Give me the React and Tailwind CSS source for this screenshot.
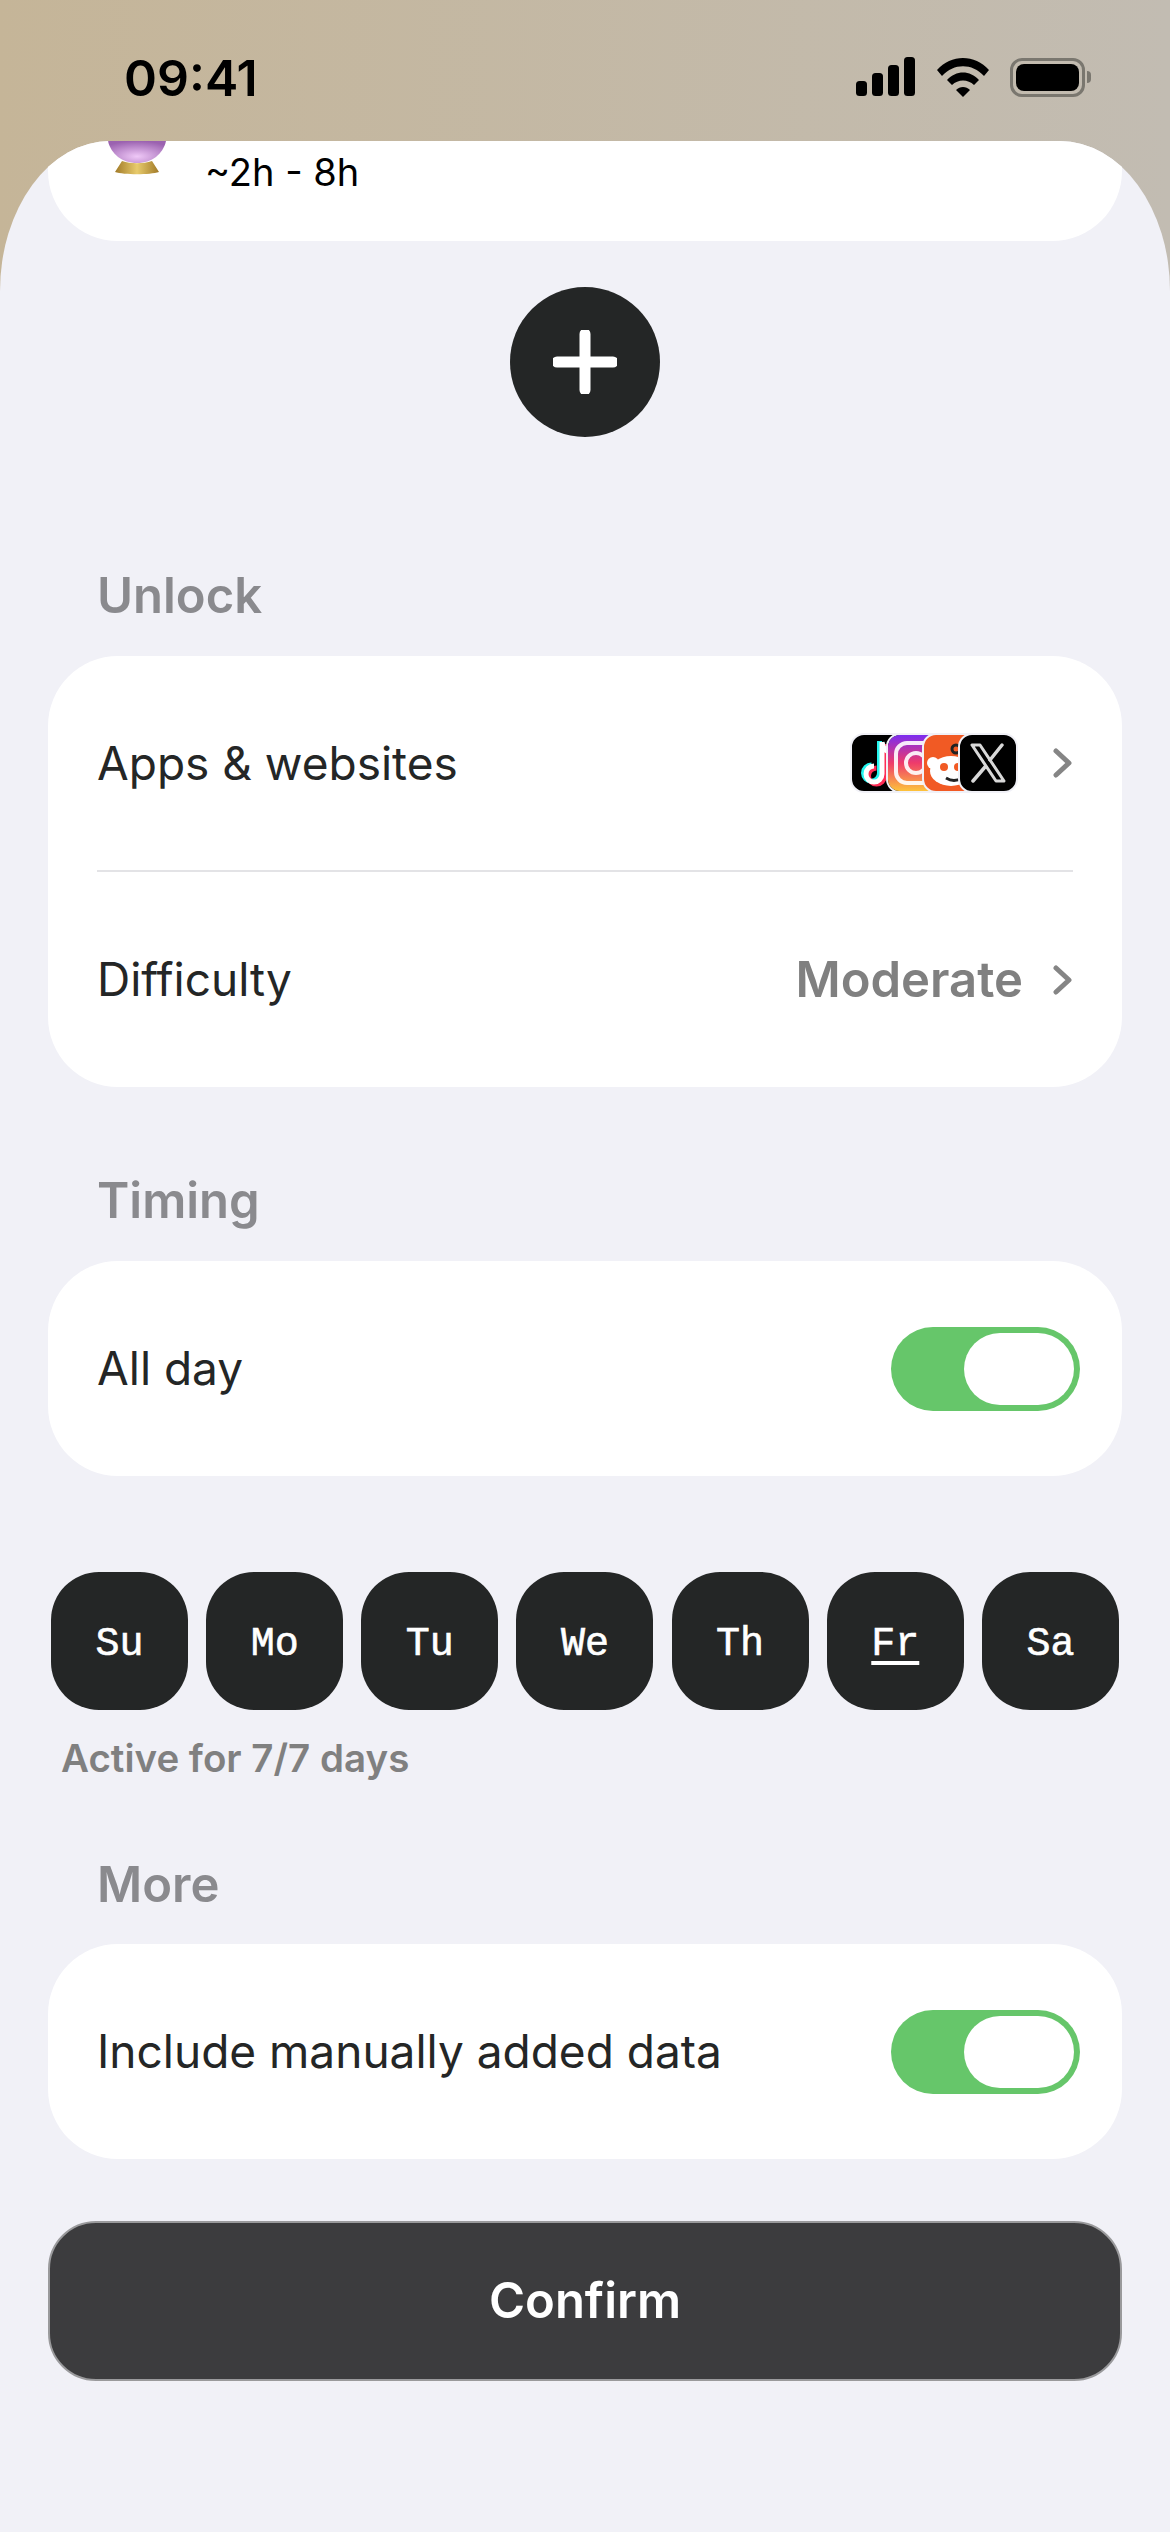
const DAYS = ["Su", "Mo", "Tu", "We", "Th", "Fr", "Sa"];

function Chevron() {
  return (
    <svg width="20" height="30" viewBox="0 0 20 30" fill="none" className="shrink-0 mr-[7px]">
      <path d="M3 3l13 12L3 27" stroke="#858585" strokeWidth="5" strokeLinecap="round" strokeLinejoin="round" />
    </svg>
  );
}

function Toggle() {
  return (
    <div className="w-[189px] h-[84px] rounded-full bg-[#66c66a] flex items-center justify-end pr-[6px] shrink-0">
      <div className="w-[110px] h-[72px] rounded-full bg-white" />
    </div>
  );
}

function Label({ children }) {
  return <div className="h-[58px] leading-[58px] pl-[97px] text-[49px] font-semibold text-[#8a8a8e]">{children}</div>;
}

function Row({ children, h = "h-[215px]" }) {
  return <div className={`${h} flex items-center justify-between pl-[49px] pr-[42px] text-[46px] text-[#242626]`}>{children}</div>;
}

function AppIcon({ children, className = "" }) {
  return (
    <div className={`w-[56px] h-[56px] rounded-[14px] overflow-hidden border-[2px] border-[#f1f1f7] box-content -ml-[24px] first:ml-0 ${className}`}>
      {children}
    </div>
  );
}

function AppIcons() {
  return (
    <div className="flex items-center mr-[35px]">
      <AppIcon className="bg-black z-0">
        <svg viewBox="0 0 56 56" width="56" height="56" fill="none">
          <path d="M30 7v32a8 8 0 1 1-8-8" stroke="#25f4ee" strokeWidth="5" transform="translate(-2.5 -1)" />
          <path d="M30 7v32a8 8 0 1 1-8-8" stroke="#fe2c55" strokeWidth="5" transform="translate(2.5 2)" />
          <path d="M30 7v32a8 8 0 1 1-8-8M30 7c1 7 6 11 13 12" stroke="#fff" strokeWidth="5" />
        </svg>
      </AppIcon>
      <AppIcon className="z-10">
        <svg viewBox="0 0 56 56" width="56" height="56" fill="none">
          <defs>
            <linearGradient id="ig" x1="0.35" y1="1" x2="0.35" y2="0">
              <stop offset="0" stopColor="#fdc33b" />
              <stop offset="0.5" stopColor="#ef3b6a" />
              <stop offset="1" stopColor="#7c2df0" />
            </linearGradient>
          </defs>
          <rect width="56" height="56" fill="url(#ig)" />
          <rect x="8" y="8" width="40" height="40" rx="11" stroke="#fff" strokeOpacity="0.9" strokeWidth="4" />
          <circle cx="28" cy="28" r="10" stroke="#fff" strokeOpacity="0.9" strokeWidth="4" />
        </svg>
      </AppIcon>
      <AppIcon className="bg-[#f15a24] z-20">
        <svg viewBox="0 0 56 56" width="56" height="56">
          <circle cx="9" cy="28" r="6" fill="#fff" />
          <ellipse cx="27" cy="36" rx="21" ry="15" fill="#fff" />
          <circle cx="20" cy="32" r="4" fill="#f15a24" />
          <circle cx="34" cy="32" r="4" fill="#f15a24" />
          <path d="M22 43c5 3 11 3 16 0" stroke="#222" strokeWidth="3" fill="none" />
          <circle cx="32" cy="14" r="4" fill="none" stroke="#222" strokeWidth="3" />
        </svg>
      </AppIcon>
      <AppIcon className="bg-black z-30">
        <svg viewBox="0 0 56 56" width="56" height="56" fill="none">
          <path d="M12 10h8l24 36h-8z" stroke="#d8d8d8" strokeWidth="3" strokeLinejoin="round" />
          <path d="M42 10L30 25M25 32L13 46" stroke="#d8d8d8" strokeWidth="3.5" strokeLinecap="round" />
        </svg>
      </AppIcon>
    </div>
  );
}

function CrystalBall() {
  return (
    <svg width="60" height="34" viewBox="0 0 60 34" className="shrink-0">
      <defs>
        <radialGradient id="ball" cx="0.5" cy="0.7" r="0.7">
          <stop offset="0" stopColor="#efc8f7" />
          <stop offset="1" stopColor="#9b62b0" />
        </radialGradient>
        <linearGradient id="stand" x1="0" y1="0" x2="1" y2="0">
          <stop offset="0" stopColor="#a17a28" />
          <stop offset="0.5" stopColor="#e8cb6c" />
          <stop offset="1" stopColor="#a17a28" />
        </linearGradient>
      </defs>
      <path d="M1 0h58c-3 13-14 22-29 22S4 13 1 0z" fill="url(#ball)" />
      <path d="M15 20c9 3 21 3 30 0l7 11c-9 3-35 3-44 0z" fill="url(#stand)" />
    </svg>
  );
}

function StatusBar() {
  return (
    <div className="h-[141px] relative flex items-start justify-between pl-[124px] pr-[79px] pt-[49px]">
      <span className="text-[50px] leading-[58px] font-semibold text-black font-['Inter',sans-serif]">09:41</span>
      <div className="flex items-center gap-[21px] pt-[8px]">
        <svg width="60" height="40" viewBox="0 0 60 40" fill="#000">
          <rect x="0" y="24" width="11" height="15" rx="3.5" />
          <rect x="16" y="16" width="11" height="23" rx="3.5" />
          <rect x="32" y="8" width="11" height="31" rx="3.5" />
          <rect x="48" y="0" width="11" height="39" rx="3.5" />
        </svg>
        <svg width="52" height="40" viewBox="0 0 52 40" fill="#000">
          <path d="M0 13C14 -3 38 -3 52 13l-5 6C35 6 17 6 5 19z" />
          <path d="M10 23c9-10 23-10 32 0l-5 5c-6-6-16-6-22 0z" />
          <path d="M19 33c4-4 10-4 14 0l-7 7z" />
        </svg>
        <div className="flex items-center">
          <div className="w-[75px] h-[39px] rounded-[12px] border-[3px] border-[#7a776f] p-[3px]">
            <div className="w-full h-full rounded-[8px] bg-black" />
          </div>
          <div className="w-[4px] h-[12px] rounded-r-full bg-[#7a776f] ml-[2px]" />
        </div>
      </div>
    </div>
  );
}

export default function App() {
  return (
    <div className="w-[1170px] h-[2532px] overflow-hidden flex flex-col bg-gradient-to-r from-[#c5b598] to-[#c2bcb2] font-['Inter',sans-serif]">
      <StatusBar />
      <div className="flex-1 bg-[#f1f1f7] rounded-t-[110px_150px] overflow-hidden flex flex-col">
        <div className="mx-[48px] h-[100px] bg-white rounded-b-[70px] flex items-start pl-[59px] shrink-0">
          <CrystalBall />
          <span className="ml-[38px] mt-[9px] text-[38px] leading-[44px] text-black">~2h - 8h</span>
        </div>

        <div className="mt-[46px] w-[150px] h-[150px] rounded-full bg-[#242626] self-center flex items-center justify-center shrink-0">
          <svg width="64" height="64" viewBox="0 0 64 64" fill="none">
            <path d="M32 4v56M4 32h56" stroke="#fff" strokeWidth="11" strokeLinecap="round" />
          </svg>
        </div>

        <div className="mt-[130px]"><Label>Unlock</Label></div>
        <div className="mt-[31px] mx-[48px] bg-white rounded-[70px] flex flex-col">
          <Row h="h-[214px]">
            <span>Apps &amp; websites</span>
            <div className="flex items-center"><AppIcons /><Chevron /></div>
          </Row>
          <div className="mx-[49px] h-[2px] bg-[#e3e3e6]" />
          <Row>
            <span>Difficulty</span>
            <div className="flex items-center">
              <span className="text-[49px] font-semibold text-[#808080] mr-[30px]">Moderate</span>
              <Chevron />
            </div>
          </Row>
        </div>

        <div className="mt-[85px]"><Label>Timing</Label></div>
        <div className="mt-[31px] mx-[48px] bg-white rounded-[70px]">
          <Row>
            <span>All day</span>
            <Toggle />
          </Row>
        </div>

        <div className="mt-[96px] mx-[51px] flex justify-between">
          {DAYS.map((d) => (
            <div key={d} className="w-[137px] h-[138px] pt-[8px] rounded-[48px] bg-[#242626] flex items-center justify-center text-[40px] text-white font-['Liberation_Mono',monospace] [-webkit-text-stroke:0.6px_white]">
              <span className={d === "Fr" ? "underline underline-offset-[6px]" : ""}>{d}</span>
            </div>
          ))}
        </div>

        <div className="mt-[26px] pl-[61px] text-[38.5px] leading-[44px] font-semibold text-[#808080]">Active for 7/7 days</div>

        <div className="mt-[76px]"><Label>More</Label></div>
        <div className="mt-[30px] mx-[48px] bg-white rounded-[70px]">
          <Row>
            <span>Include manually added data</span>
            <Toggle />
          </Row>
        </div>

        <div className="mt-[62px] mx-[48px] h-[160px] rounded-[48px] bg-[#3c3c3e] border-[2px] border-[#9a9a9c] flex items-center justify-center text-[49px] font-semibold text-white">
          Confirm
        </div>
      </div>
    </div>
  );
}
